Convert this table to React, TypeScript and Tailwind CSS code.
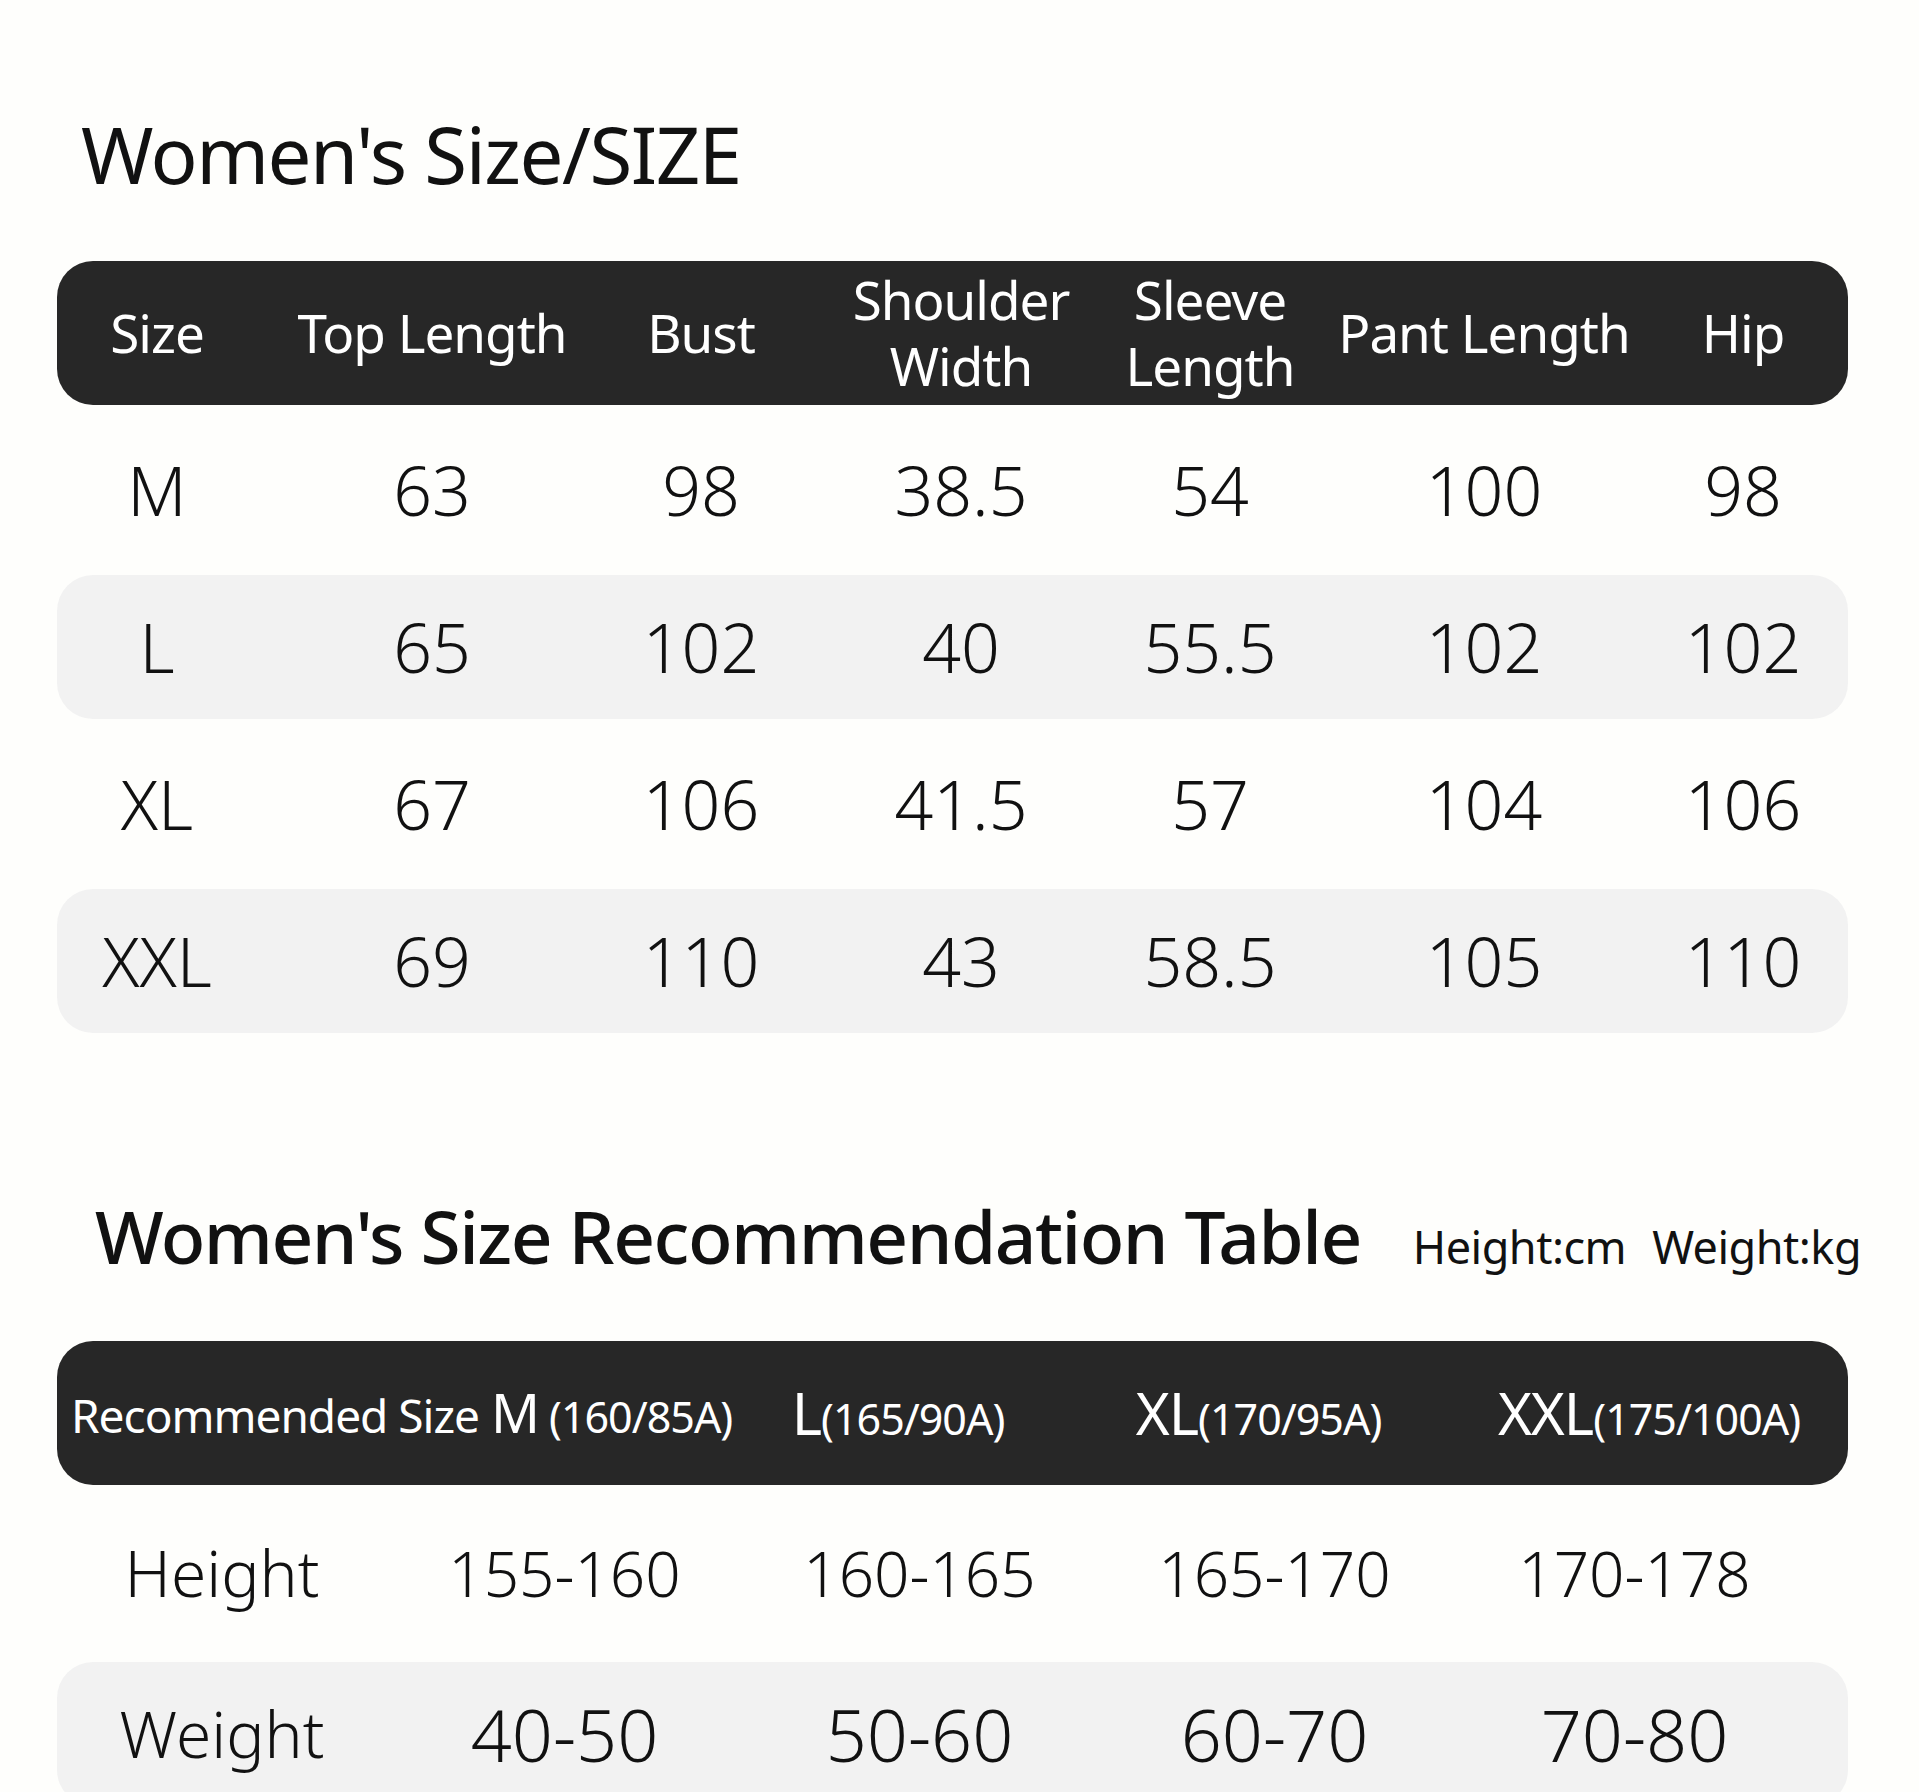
const sizeCols = "grid grid-cols-[200px_350px_188px_332px_166px_382px_136px] items-center";
const recCols = "grid grid-cols-[330px_355px_355px_355px_365px] items-center";

const sizeHeaders: string[][] = [
  ["Size"],
  ["Top Length"],
  ["Bust"],
  ["Shoulder", "Width"],
  ["Sleeve", "Length"],
  ["Pant Length"],
  ["Hip"],
];

const sizeRows: string[][] = [
  ["M", "63", "98", "38.5", "54", "100", "98"],
  ["L", "65", "102", "40", "55.5", "102", "102"],
  ["XL", "67", "106", "41.5", "57", "104", "106"],
  ["XXL", "69", "110", "43", "58.5", "105", "110"],
];

const recRows = [
  { label: "Height", values: ["155-160", "160-165", "165-170", "170-178"], shaded: false },
  { label: "Weight", values: ["40-50", "50-60", "60-70", "70-80"], shaded: true },
];

export default function App() {
  return (
    <div className="min-h-screen w-full bg-[#fefefc] text-[#111] font-['Noto_Sans',sans-serif]">
      <div className="w-[1919px] flex flex-col pl-[57px] pt-[115px]">
        {/* size chart */}
        <h1 className="pl-[24px] text-[78px] leading-none font-normal tracking-[-1.5px] whitespace-nowrap">Women's Size/SIZE</h1>

        <div className="mt-[68px] w-[1791px] flex flex-col gap-[13px]">
          <div className={`${sizeCols} h-[144px] rounded-[36px] bg-[#272727] text-white`}>
            {sizeHeaders.map((lines, i) => (
              <div key={i} className="flex flex-col items-center text-[53px] leading-[66px] whitespace-nowrap tracking-[-1px]">
                {lines.map((l) => (
                  <span key={l}>{l}</span>
                ))}
              </div>
            ))}
          </div>

          {sizeRows.map((row, r) => (
            <div
              key={row[0]}
              className={`${sizeCols} h-[144px] rounded-[36px] ${r % 2 === 1 ? "bg-[#f2f2f2]" : ""}`}
            >
              {row.map((v, i) => (
                <div key={i} className="text-center text-[68px] font-light leading-none">
                  {v}
                </div>
              ))}
            </div>
          ))}
        </div>

        {/* recommendation */}
        <div className="mt-[166px] pl-[38px] flex items-baseline whitespace-nowrap">
          <h2 className="text-[73px] leading-none font-medium tracking-[-1.5px]">Women's Size Recommendation Table</h2>
          <span className="ml-[52px] text-[45px] tracking-[-0.5px]">Height:cm</span>
          <span className="ml-[26px] text-[45px] tracking-[-0.5px]">Weight:kg</span>
        </div>

        <div className="mt-[60px] w-[1791px] flex flex-col">
          <div className="h-[144px] rounded-[36px] bg-[#272727] text-white grid grid-cols-[664px_326px_395px_1fr] items-center pl-[14px] whitespace-nowrap tracking-[-1px]">
            <div className="flex items-baseline">
              <span className="text-[46px]">Recommended Size</span>
              <span className="ml-[12px] text-[54px]">M</span>
              <span className="ml-[10px] text-[43px]">(160/85A)</span>
            </div>
            <div className="flex items-baseline justify-center">
              <span className="text-[58px]">L</span>
              <span className="text-[43px]">(165/90A)</span>
            </div>
            <div className="flex items-baseline justify-center">
              <span className="text-[58px]">XL</span>
              <span className="text-[43px]">(170/95A)</span>
            </div>
            <div className="flex items-baseline justify-center pr-[6px]">
              <span className="text-[58px]">XXL</span>
              <span className="text-[43px]">(175/100A)</span>
            </div>
          </div>

          {recRows.map((row) => (
            <div
              key={row.label}
              className={`${recCols} rounded-[36px] ${row.shaded ? "h-[144px] bg-[#f2f2f2]" : "h-[177px]"}`}
            >
              <div className="text-center text-[64px] font-light leading-none">{row.label}</div>
              {row.values.map((v) => (
                <div
                  key={v}
                  className={`text-center font-light leading-none ${row.shaded ? "text-[72px]" : "text-[62px]"}`}
                >
                  {v}
                </div>
              ))}
            </div>
          ))}
        </div>
      </div>
    </div>
  );
}
